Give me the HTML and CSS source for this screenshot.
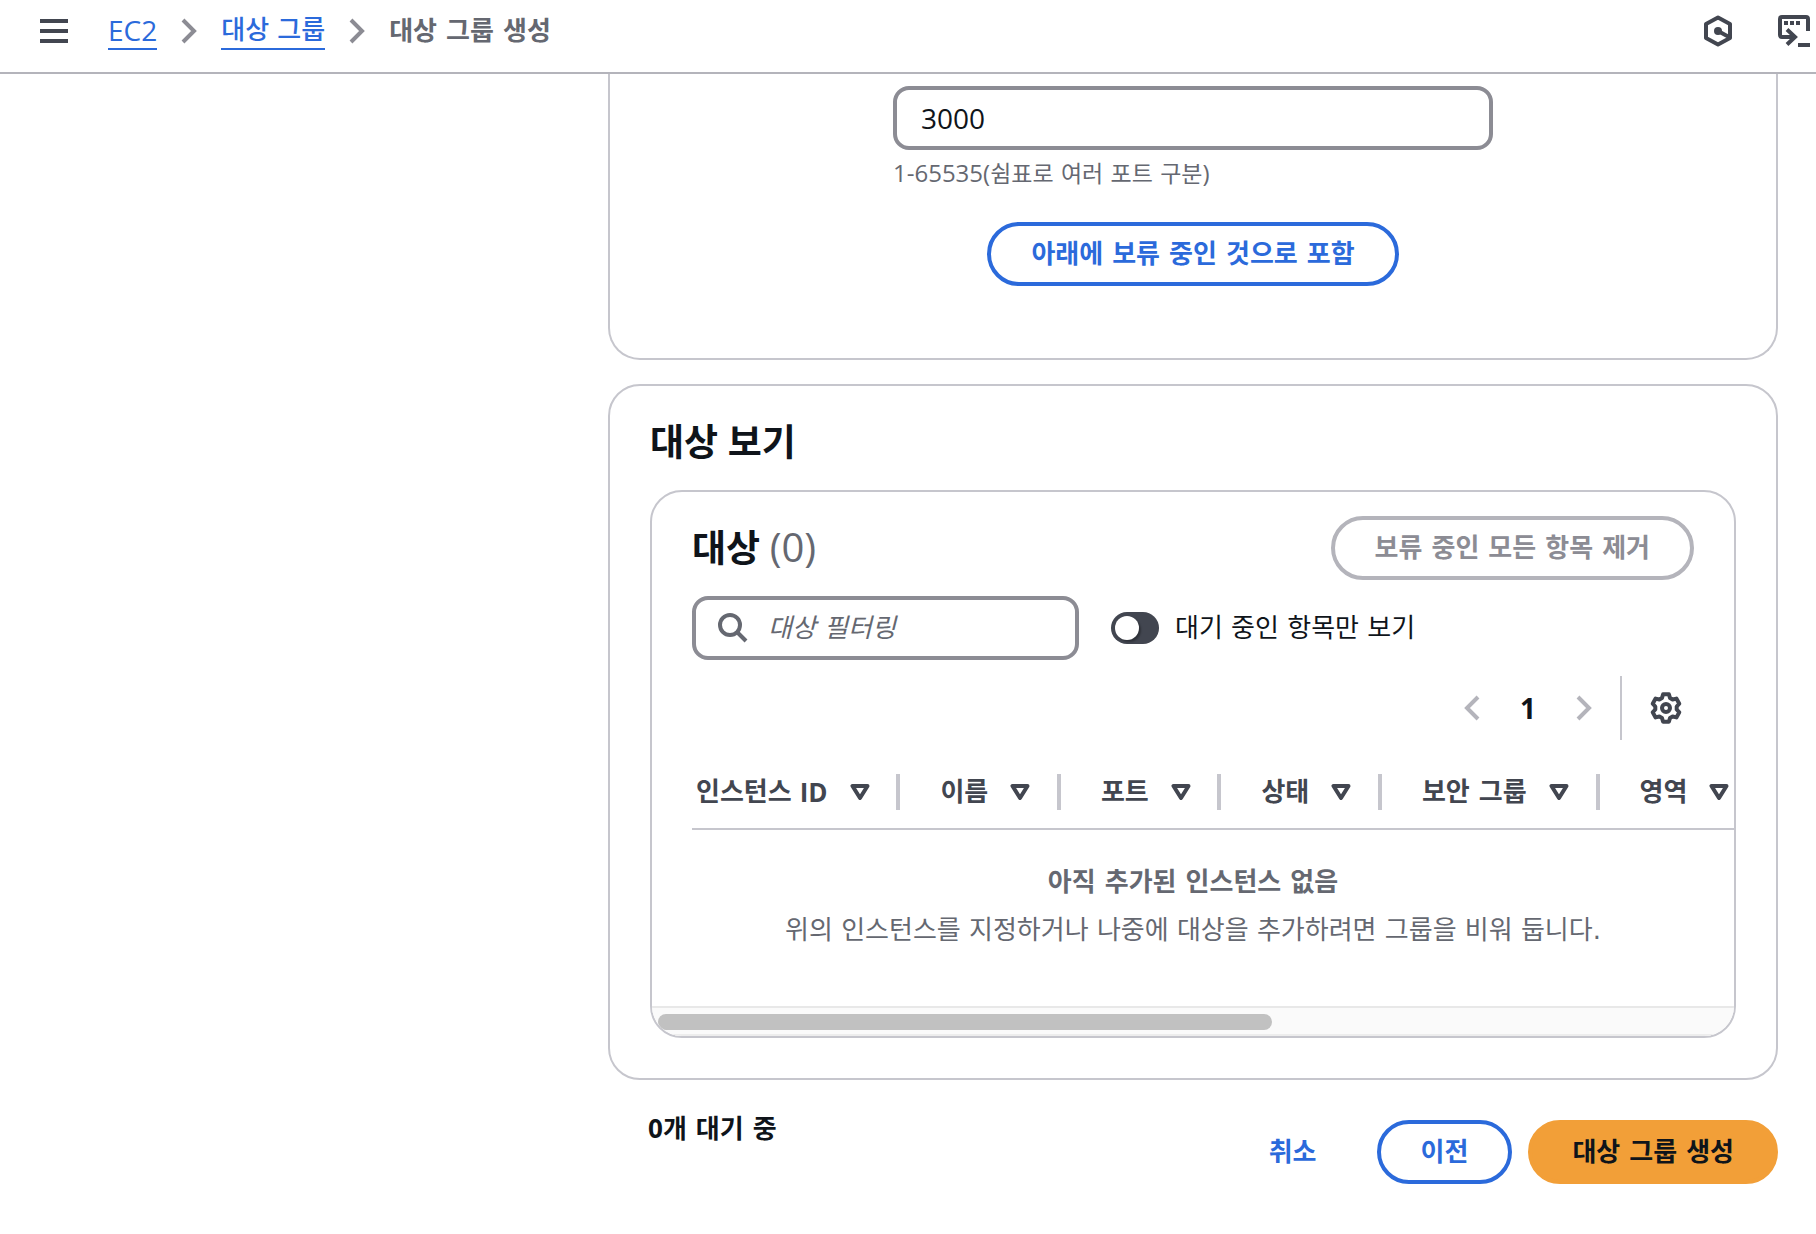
FILE: index.html
```html
<!DOCTYPE html>
<html lang="ko">
<head>
    <meta charset="UTF-8">
    <meta name="viewport" content="width=device-width, initial-scale=1.0">
    <title>대상 그룹 생성 | EC2</title>
    <link rel="stylesheet" href="styles.css">
</head>
<body>
    <header class="topbar">
        <button class="icon-btn" aria-label="메뉴">
            <svg width="28" height="24" viewBox="0 0 28 24" fill="currentColor">
                <path d="M0 0h28v4H0zM0 10h28v4H0zM0 20h28v4H0z"/>
            </svg>
        </button>

        <nav class="breadcrumb">
            <a href="#" class="latin">EC2</a>
            <svg class="chevron" width="16" height="26" viewBox="0 0 16 26"><path d="M2 2l11 11L2 24"/></svg>
            <a href="#">대상 그룹</a>
            <svg class="chevron" width="16" height="26" viewBox="0 0 16 26"><path d="M2 2l11 11L2 24"/></svg>
            <span class="current">대상 그룹 생성</span>
        </nav>

        <div class="tools">
            <button class="icon-btn" aria-label="Amazon Q">
                <svg width="30" height="32" viewBox="0 0 30 32" fill="none" stroke="currentColor" stroke-width="4">
                    <path d="M15 2.500L27 9v14l-12 6.500L3 23V9z" stroke-linejoin="round"/>
                    <path d="M15 16l11 6"/>
                    <circle cx="15" cy="16" r="4" fill="currentColor" stroke="none"/>
                </svg>
            </button>
            <button class="icon-btn" aria-label="CloudShell">
                <svg width="32" height="32" viewBox="0 0 32 32" fill="none" stroke="currentColor" stroke-width="4">
                    <path d="M30 16V4a2 2 0 0 0-2-2H4a2 2 0 0 0-2 2v16a2 2 0 0 0 2 2h13"/>
                    <path d="M9 14.500l8 7.500-8 7.500"/>
                    <path d="M20 30h12"/>
                    <path d="M6 6h4v4H6zM12 6h4v4h-4zM18 6h4v4h-4z" fill="currentColor" stroke="none"/>
                </svg>
            </button>
        </div>
    </header>

    <main class="content">
        <section class="card card-ports">
            <div class="port-field">
                <input type="text" id="port" class="text-input latin" value="3000" aria-describedby="port-hint" aria-label="포트">
                <p class="hint" id="port-hint"><span class="latin">1-65535(</span>쉼표로 여러 포트 구분<span class="latin">)</span></p>
            </div>
            <button class="btn btn-normal">아래에 보류 중인 것으로 포함</button>
        </section>

        <section class="card card-review">
            <h2>대상 보기</h2>

            <div class="card targets">
                <div class="targets-header">
                    <h2>대상 <span class="count">(0)</span></h2>
                    <button class="btn btn-disabled" disabled>보류 중인 모든 항목 제거</button>
                </div>

                <div class="filters">
                    <div class="search">
                        <svg width="30" height="30" viewBox="0 0 30 30" fill="none" stroke="currentColor" stroke-width="4">
                            <circle cx="12" cy="12" r="10"/>
                            <path d="M19 19l9 9"/>
                        </svg>
                        <input type="search" placeholder="대상 필터링" aria-label="대상 필터링">
                    </div>
                    <label class="toggle">
                        <input type="checkbox">
                        <span>대기 중인 항목만 보기</span>
                    </label>
                </div>

                <div class="pagination">
                    <button class="icon-btn page-arrow" aria-label="이전 페이지" disabled>
                        <svg class="chevron" width="16" height="26" viewBox="0 0 16 26"><path d="M14 2L3 13l11 11"/></svg>
                    </button>
                    <button class="icon-btn page-number latin">1</button>
                    <button class="icon-btn page-arrow" aria-label="다음 페이지" disabled>
                        <svg class="chevron" width="16" height="26" viewBox="0 0 16 26"><path d="M2 2l11 11L2 24"/></svg>
                    </button>
                    <button class="icon-btn settings" aria-label="기본 설정">
                        <svg width="32" height="32" viewBox="0 0 32 32" fill="none" stroke="currentColor" stroke-width="4" stroke-linejoin="round">
                            <path d="M13.100 2.300h5.800L20 6l2.600 1.500 3.800-.9 2.900 5.100-2.600 2.800v3l2.600 2.800-2.900 5.100-3.800-.9L20 26l-1.100 3.700h-5.800L12 26l-2.600-1.500-3.800.9-2.900-5.100 2.600-2.800v-3l-2.600-2.800 2.900-5.100 3.800.9L12 6z"/>
                            <circle cx="16" cy="16" r="4"/>
                        </svg>
                    </button>
                </div>

                <div class="table-wrap">
                    <table>
                        <thead>
                            <tr>
                                <th><button class="sort">인스턴스 <span class="latin">ID</span><svg width="20" height="16" viewBox="0 0 20 16"><path d="M2.500 2h15L10 14z"/></svg></button></th>
                                <th><button class="sort">이름<svg width="20" height="16" viewBox="0 0 20 16"><path d="M2.500 2h15L10 14z"/></svg></button></th>
                                <th><button class="sort">포트<svg width="20" height="16" viewBox="0 0 20 16"><path d="M2.500 2h15L10 14z"/></svg></button></th>
                                <th><button class="sort">상태<svg width="20" height="16" viewBox="0 0 20 16"><path d="M2.500 2h15L10 14z"/></svg></button></th>
                                <th><button class="sort">보안 그룹<svg width="20" height="16" viewBox="0 0 20 16"><path d="M2.500 2h15L10 14z"/></svg></button></th>
                                <th><button class="sort">영역<svg width="20" height="16" viewBox="0 0 20 16"><path d="M2.500 2h15L10 14z"/></svg></button></th>
                            </tr>
                        </thead>
                    </table>
                </div>

                <div class="empty">
                    <strong>아직 추가된 인스턴스 없음</strong>
                    <p>위의 인스턴스를 지정하거나 나중에 대상을 추가하려면 그룹을 비워 둡니다.</p>
                </div>

                <div class="scrollbar"><div class="thumb"></div></div>
            </div>
        </section>

        <footer class="actions">
            <strong class="pending"><span class="latin">0</span>개 대기 중</strong>
            <div class="buttons">
                <button class="btn btn-link">취소</button>
                <button class="btn btn-normal">이전</button>
                <button class="btn btn-primary">대상 그룹 생성</button>
            </div>
        </footer>
    </main>
</body>
</html>
```
FILE: styles.css
```css
* {
    margin: 0;
    padding: 0;
    box-sizing: border-box;
}

body {
    font-family: "DejaVu Sans", "Noto Sans CJK KR", sans-serif;
    font-size: 26px;
    line-height: 40px;
    color: #0f141a;
    background: #fff;
}

button, input {
    font: inherit;
    color: inherit;
}

button {
    background: none;
    border: none;
    cursor: pointer;
}

svg {
    display: block;
    flex: none;
}

.latin {
    font-family: "Open Sans", "Noto Sans CJK KR", sans-serif;
}

/* top bar */
.topbar {
    display: flex;
    align-items: center;
    height: 74px;
    padding: 0 6px 10px 40px;
    border-bottom: 2px solid #b4b4bb;
}

.icon-btn {
    display: flex;
    align-items: center;
    justify-content: center;
    color: #424650;
}

.breadcrumb {
    display: flex;
    align-items: center;
    gap: 24px;
    margin-left: 40px;
}

.breadcrumb a {
    height: 38px;
    line-height: 36px;
    color: #2b6adb;
    font-weight: 500;
    text-decoration: none;
    border-bottom: 2px solid #2b6adb;
}

.breadcrumb .latin {
    font-size: 28px;
}

.breadcrumb .current {
    font-weight: bold;
    color: #656871;
}

.chevron {
    fill: none;
    stroke: #8c8c94;
    stroke-width: 4;
}

.tools {
    display: flex;
    gap: 45px;
    margin-left: auto;
}

/* cards */
.content {
    padding: 0 38px 50px 608px;
}

.card {
    border: 2px solid #c6c6cd;
    border-radius: 32px;
}

.card-ports {
    display: flex;
    flex-direction: column;
    align-items: center;
    gap: 32px;
    padding: 12px 40px 72px;
    border-top: none;
    border-radius: 0 0 32px 32px;
}

.port-field {
    width: 100%;
    max-width: 600px;
}

.text-input {
    display: block;
    width: 100%;
    height: 64px;
    padding: 0 24px;
    font-size: 28px;
    font-weight: 500;
    border: 4px solid #8c8c94;
    border-radius: 16px;
    background: #fff;
}

.hint {
    margin-top: 8px;
    font-size: 23px;
    line-height: 32px;
    color: #656871;
}

.hint .latin {
    font-size: 24px;
    font-weight: 500;
    line-height: 1;
}

.btn {
    height: 64px;
    padding: 0 40px;
    font-weight: bold;
    white-space: nowrap;
    border: 4px solid transparent;
    border-radius: 32px;
}

.btn-normal {
    color: #2b6adb;
    border-color: #2b6adb;
}

.btn-link {
    color: #2b6adb;
}

.btn-primary {
    background: #f29f38;
    border-color: #f29f38;
}

.btn-disabled {
    color: #8c8c94;
    border-color: #b4b4bb;
    cursor: default;
}

.card-review {
    margin-top: 24px;
    padding: 32px 40px 40px;
}

h2 {
    font-family: "Open Sans", "Noto Sans CJK KR", sans-serif;
    font-size: 37px;
    line-height: 48px;
}

.card-review > h2 {
    margin-bottom: 24px;
}

.targets {
    overflow: hidden;
}

.targets-header {
    display: flex;
    align-items: center;
    justify-content: space-between;
    padding: 24px 40px 0;
}

.count {
    font-size: 40px;
    font-weight: 500;
    line-height: 1;
    color: #656871;
}

/* filters */
.filters {
    display: flex;
    align-items: center;
    gap: 32px;
    padding: 16px 40px 0;
}

.search {
    display: flex;
    align-items: center;
    gap: 20px;
    width: 387px;
    height: 64px;
    padding: 0 22px;
    color: #656871;
    border: 4px solid #8c8c94;
    border-radius: 16px;
}

.search input {
    width: 100%;
    min-width: 0;
    border: none;
    outline: none;
    background: none;
}

.search input::placeholder {
    color: #656871;
    font-style: italic;
    opacity: 1;
}

.toggle {
    display: flex;
    align-items: center;
    gap: 16px;
    cursor: pointer;
}

.toggle input {
    appearance: none;
    width: 48px;
    height: 32px;
    padding: 4px;
    background: #424650;
    border-radius: 16px;
}

.toggle input::before {
    content: "";
    display: block;
    width: 24px;
    height: 24px;
    background: #fff;
    border-radius: 50%;
    box-shadow: 2px 2px 2px rgba(0, 0, 0, 0.3);
}

/* pagination */
.pagination {
    display: flex;
    align-items: center;
    justify-content: flex-end;
    height: 64px;
    margin: 16px 40px 0;
}

.page-arrow {
    width: 44px;
    height: 64px;
}

.page-arrow .chevron {
    stroke: #b4b4bb;
}

.page-number {
    width: 68px;
    color: #0f141a;
    font-size: 28px;
    font-weight: bold;
}

.settings {
    width: 74px;
    height: 64px;
    margin-left: 14px;
    padding-left: 16px;
    border-left: 2px solid #c6c6cd;
}

/* table */
.table-wrap {
    margin: 16px 0 0 40px;
    overflow: hidden;
}

table {
    width: 100%;
    border-spacing: 0;
}

th {
    height: 74px;
    border-bottom: 2px solid #c6c6cd;
}

.sort {
    display: flex;
    align-items: center;
    width: 100%;
    height: 36px;
    padding: 0 26px 0 40px;
    color: #424650;
    font-weight: bold;
    white-space: nowrap;
    border-right: 4px solid #c6c6cd;
}

th:first-child .sort {
    padding-left: 4px;
}

th:last-child .sort {
    padding-right: 4px;
    border-right: none;
}

.sort .latin {
    margin-left: 8px;
}

.sort svg {
    margin-left: 22px;
    fill: none;
    stroke: #424650;
    stroke-width: 4;
    stroke-linejoin: round;
}

.empty {
    padding: 28px 40px 52px;
    line-height: 48px;
    text-align: center;
    color: #656871;
}

.scrollbar {
    height: 30px;
    padding: 6px;
    background: #fafafa;
    border-top: 2px solid #e8e8e8;
    border-bottom: 2px solid #ededed;
}

.thumb {
    width: 57.4%;
    height: 16px;
    background: #c1c1c1;
    border-radius: 8px;
}

/* footer */
.actions {
    display: flex;
    align-items: flex-start;
    justify-content: space-between;
    padding: 24px 0 0 40px;
}

.pending {
    line-height: 48px;
}

.buttons {
    display: flex;
    gap: 16px;
    margin-top: 16px;
}
```
